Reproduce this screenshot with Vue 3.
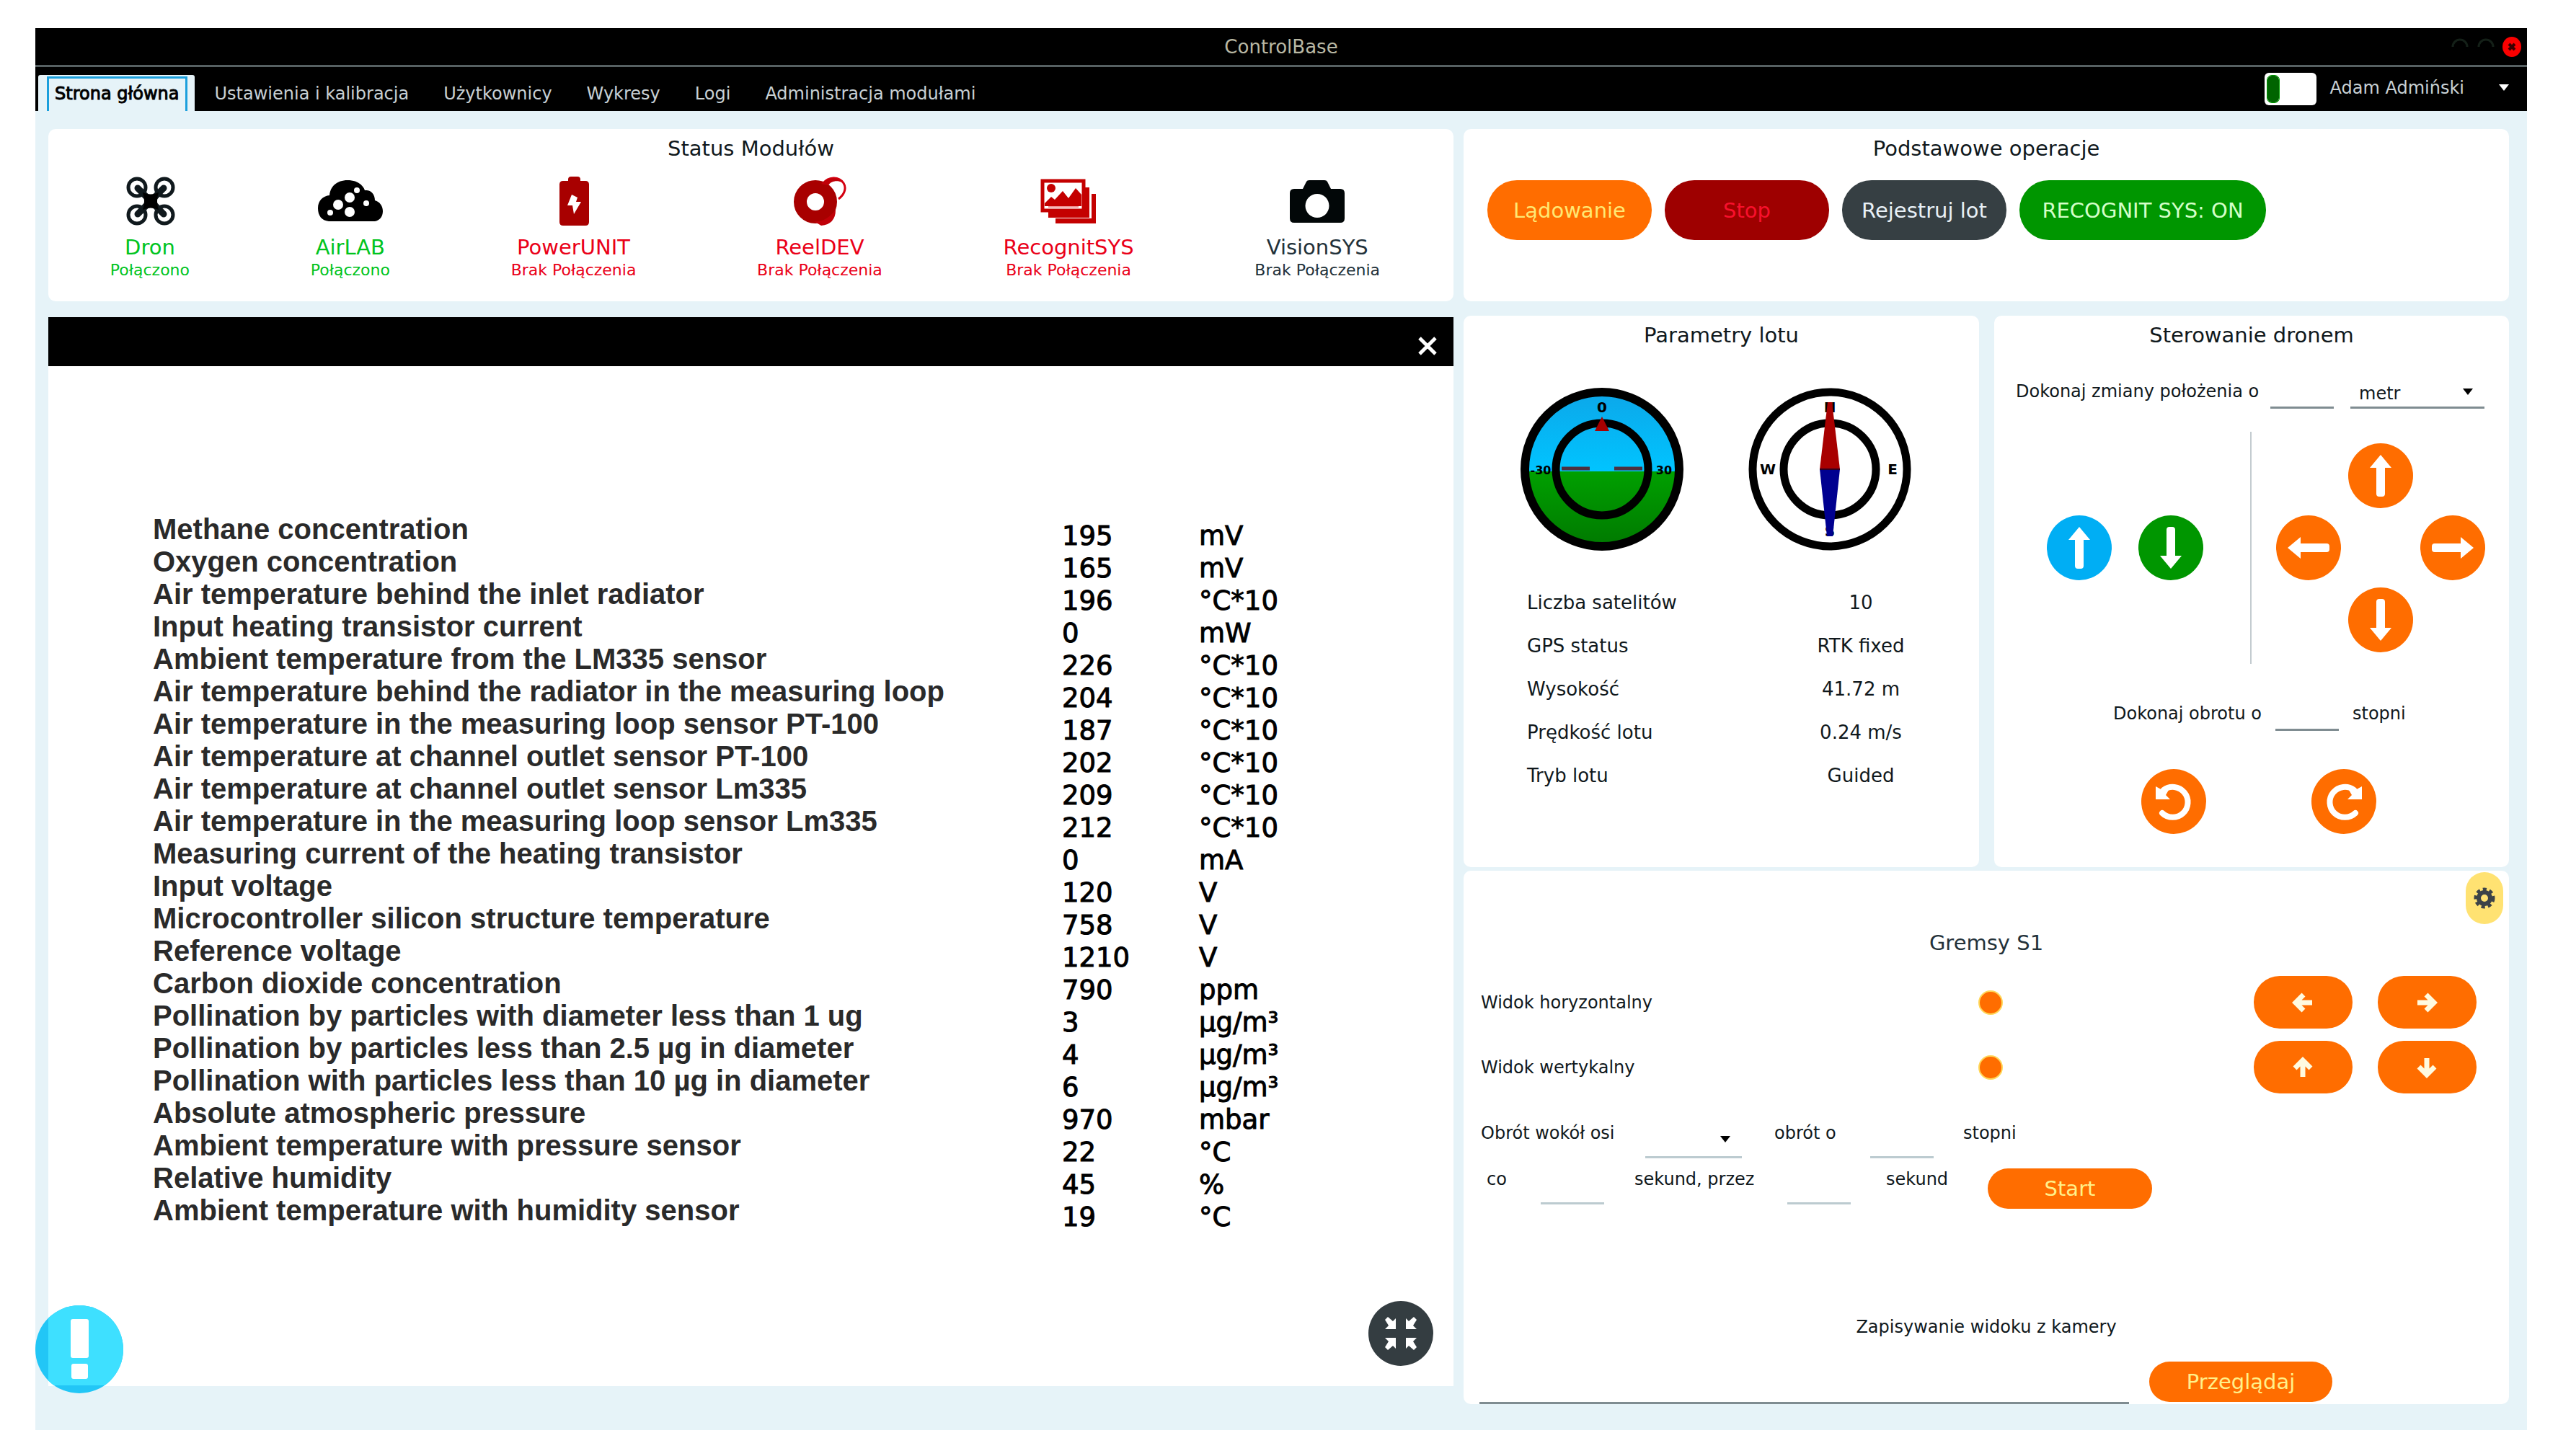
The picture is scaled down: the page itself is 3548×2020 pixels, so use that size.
<script setup>
import { ref } from 'vue'

const tabs = ['Strona główna', 'Ustawienia i kalibracja', 'Użytkownicy', 'Wykresy', 'Logi', 'Administracja modułami']

const modules = [
  { name: 'Dron', state: 'Połączono', tone: 'ok', icon: 'drone' },
  { name: 'AirLAB', state: 'Połączono', tone: 'ok', icon: 'cloud' },
  { name: 'PowerUNIT', state: 'Brak Połączenia', tone: 'bad', icon: 'battery' },
  { name: 'ReelDEV', state: 'Brak Połączenia', tone: 'bad', icon: 'reel' },
  { name: 'RecognitSYS', state: 'Brak Połączenia', tone: 'bad', icon: 'photos' },
  { name: 'VisionSYS', state: 'Brak Połączenia', tone: 'idle', icon: 'camera' },
]

const readings = [
  ['Methane concentration', '195', 'mV'],
  ['Oxygen concentration', '165', 'mV'],
  ['Air temperature behind the inlet radiator', '196', '°C*10'],
  ['Input heating transistor current', '0', 'mW'],
  ['Ambient temperature from the LM335 sensor', '226', '°C*10'],
  ['Air temperature behind the radiator in the measuring loop', '204', '°C*10'],
  ['Air temperature in the measuring loop sensor PT-100', '187', '°C*10'],
  ['Air temperature at channel outlet sensor PT-100', '202', '°C*10'],
  ['Air temperature at channel outlet sensor Lm335', '209', '°C*10'],
  ['Air temperature in the measuring loop sensor Lm335', '212', '°C*10'],
  ['Measuring current of the heating transistor', '0', 'mA'],
  ['Input voltage', '120', 'V'],
  ['Microcontroller silicon structure temperature', '758', 'V'],
  ['Reference voltage', '1210', 'V'],
  ['Carbon dioxide concentration', '790', 'ppm'],
  ['Pollination by particles with diameter less than 1 ug', '3', 'µg/m³'],
  ['Pollination by particles less than 2.5 µg in diameter', '4', 'µg/m³'],
  ['Pollination with particles less than 10 µg in diameter', '6', 'µg/m³'],
  ['Absolute atmospheric pressure', '970', 'mbar'],
  ['Ambient temperature with pressure sensor', '22', '°C'],
  ['Relative humidity', '45', '%'],
  ['Ambient temperature with humidity sensor', '19', '°C'],
]

const flight = [
  ['Liczba satelitów', '10'],
  ['GPS status', 'RTK fixed'],
  ['Wysokość', '41.72 m'],
  ['Prędkość lotu', '0.24 m/s'],
  ['Tryb lotu', 'Guided'],
]

// Long arrow pointing up, turned by angle for the other directions
const moves = [
  { label: 'Do przodu', angle: 0, area: 'up' },
  { label: 'W lewo', angle: 270, area: 'left' },
  { label: 'W prawo', angle: 90, area: 'right' },
  { label: 'Do tyłu', angle: 180, area: 'down' },
]

const axes = [
  { id: 'horizontal', label: 'Widok horyzontalny', buttons: [{ label: 'Kamera w lewo', angle: 270 }, { label: 'Kamera w prawo', angle: 90 }] },
  { id: 'vertical', label: 'Widok wertykalny', buttons: [{ label: 'Kamera w górę', angle: 0 }, { label: 'Kamera w dół', angle: 180 }] },
]

const position = ref({ horizontal: 50, vertical: 50 })
const longArrow = 'M45 16 L60 34 H51 V70 Q51 74 47 74 H43 Q39 74 39 70 V34 H30 Z'
</script>

<template>
  <div class="app">
    <header class="titlebar">
      <span class="window-title">ControlBase</span>
      <div class="window-buttons">
        <button type="button" aria-label="Minimalizuj">
          <svg width="26" height="26" viewBox="0 0 26 26"><path d="M3 13a10 10 0 0 1 20 0" fill="none" stroke="#142018" stroke-width="3" /></svg>
        </button>
        <button type="button" aria-label="Maksymalizuj">
          <svg width="26" height="26" viewBox="0 0 26 26"><path d="M3 13a10 10 0 0 1 20 0" fill="none" stroke="#142018" stroke-width="3" /></svg>
        </button>
        <button type="button" aria-label="Zamknij">
          <svg width="26" height="28" viewBox="0 0 26 28"><ellipse cx="13" cy="14" rx="13" ry="14" fill="#fa0000" /><path d="M9 10l8 8M17 10l-8 8" stroke="#3a0000" stroke-width="4" /></svg>
        </button>
      </div>
    </header>

    <nav class="navbar">
      <a v-for="(tab, i) in tabs" :key="tab" href="#" class="tab" :class="{ active: i === 0 }"><span>{{ tab }}</span></a>
      <label class="switch"><input type="checkbox" aria-label="Tryb" /></label>
      <button type="button" class="user">Adam Admiński<i class="caret light"></i></button>
    </nav>

    <main class="board">
      <div class="column left">
        <section class="card top">
          <h2>Status Modułów</h2>
          <ul class="modules">
            <li v-for="m in modules" :key="m.name" :class="m.tone">
              <svg v-if="m.icon === 'drone'" class="glyph" viewBox="0 0 96 68">
                <g fill="none" stroke="#10191d" stroke-width="5">
                  <circle cx="30" cy="15" r="12" /><circle cx="68" cy="15" r="12" /><circle cx="30" cy="53" r="12" /><circle cx="68" cy="53" r="12" />
                </g>
                <path d="M31 16L67 52M67 16L31 52" stroke="#10191d" stroke-width="9" stroke-linecap="round" />
                <path d="M38 22q11 5 22 0q-4 12 0 24q-11 -5 -22 0q4 -12 0 -24z" fill="#000" />
              </svg>
              <svg v-else-if="m.icon === 'cloud'" class="glyph" viewBox="0 0 96 68">
                <path d="M18 62C8 61 3 54 3 44C3 33 10 27 19 26C20 13 30 5 44 5C57 5 65 11 68 19C76 18 82 24 82 33C89 35 93 41 93 48C93 56 88 61 82 62Z" fill="#000" />
                <g fill="#fff"><circle cx="47" cy="29" r="7" /><circle cx="31" cy="39" r="7" /><circle cx="47" cy="49" r="7" /><circle cx="57" cy="19" r="4" /><circle cx="70" cy="37" r="4" /><circle cx="20" cy="50" r="4" /></g>
              </svg>
              <svg v-else-if="m.icon === 'battery'" class="glyph" viewBox="0 0 96 68">
                <path d="M33 6H40V4Q40 0 44 0H53Q57 0 57 4V6H64Q69 6 69 11V63Q69 68 64 68H33Q28 68 28 63V11Q28 6 33 6Z" fill="#a80000" />
                <path d="M45 25L39 40H46L48 52L58 35H51L53 29Z" fill="#fff" />
              </svg>
              <svg v-else-if="m.icon === 'reel'" class="glyph" viewBox="0 0 96 68">
                <circle cx="42" cy="35" r="21" fill="none" stroke="#a80000" stroke-width="18" />
                <path d="M52 10C60 0 74 -1 81 9C86 17 81 26 74 31" fill="none" stroke="#d40010" stroke-width="3" />
                <path d="M50 10C60 0 73 0 79 8C70 4 62 8 60 12ZM40 62Q56 64 70 46Q70 66 50 68Z" fill="#c00008" />
              </svg>
              <svg v-else-if="m.icon === 'photos'" class="glyph" viewBox="0 0 96 68">
                <path d="M30 50V65H86V24H80V58H30Z" fill="#c40000" />
                <path d="M20 44V57H77V15H71V49H20Z" fill="#c40000" />
                <rect x="12" y="6" width="57" height="41" fill="#fff" stroke="#c40000" stroke-width="5" />
                <circle cx="24" cy="16" r="6" fill="#c40000" />
                <path d="M15 37L24 28L29 32L40 20L48 30L58 16L66 25V41H15Z" fill="#c40000" />
                <path d="M20 42H62" stroke="#f09090" stroke-width="2" />
              </svg>
              <svg v-else class="glyph" viewBox="0 0 96 68">
                <path fill-rule="evenodd" d="M16 17H28L33 7Q34 5 37 5H58Q61 5 62 7L67 17H80Q86 17 86 23V58Q86 64 80 64H16Q10 64 10 58V23Q10 17 16 17ZM48 24A16 16 0 1 0 48 57A16 16 0 1 0 48 24Z" fill="#020708" />
              </svg>
              <strong>{{ m.name }}</strong>
              <small>{{ m.state }}</small>
            </li>
          </ul>
        </section>

        <section class="panel">
          <div class="panel-bar">
            <button type="button" aria-label="Zamknij panel">
              <svg width="28" height="28" viewBox="0 0 28 28"><path d="M3 3L25 25M25 3L3 25" stroke="#fff" stroke-width="5" /></svg>
            </button>
          </div>
          <table class="readings">
            <tbody>
              <tr v-for="r in readings" :key="r[0]">
                <th scope="row">{{ r[0] }}</th>
                <td class="amount">{{ r[1] }}</td>
                <td>{{ r[2] }}</td>
              </tr>
            </tbody>
          </table>
          <button type="button" class="compress" aria-label="Zmniejsz">
            <svg width="90" height="90" viewBox="0 0 90 90">
              <circle cx="45" cy="45" r="45" fill="#343d41" />
              <g fill="#fff">
                <path d="M23 26L27 22L34 28L38 24V39H23L28 34Z" />
                <path d="M67 26L63 22L56 28L52 24V39H67L62 34Z" />
                <path d="M23 64L27 68L34 62L38 66V51H23L28 56Z" />
                <path d="M67 64L63 68L56 62L52 66V51H67L62 56Z" />
              </g>
            </svg>
          </button>
        </section>
      </div>

      <div class="column right">
        <section class="card top">
          <h2>Podstawowe operacje</h2>
          <div class="operations">
            <button type="button" class="pill land">Lądowanie</button>
            <button type="button" class="pill stop">Stop</button>
            <button type="button" class="pill record">Rejestruj lot</button>
            <button type="button" class="pill recognit">RECOGNIT SYS: ON</button>
          </div>
        </section>

        <div class="pair">
          <section class="card">
            <h2>Parametry lotu</h2>
            <div class="gauges">
              <svg viewBox="0 0 226 226" class="gauge">
                <defs>
                  <linearGradient id="sky" x1="0" y1="0" x2="0" y2="1"><stop offset="0" stop-color="#0ca8ea" /><stop offset="1" stop-color="#00c4ff" /></linearGradient>
                  <linearGradient id="ground" x1="0" y1="0" x2="0" y2="1"><stop offset="0" stop-color="#00a000" /><stop offset="1" stop-color="#007800" /></linearGradient>
                </defs>
                <path d="M6 116A107 107 0 0 1 220 116Z" fill="url(#sky)" />
                <path d="M6 116A107 107 0 0 0 220 116Z" fill="url(#ground)" />
                <circle cx="113" cy="113" r="107" fill="none" stroke="#000" stroke-width="12" />
                <circle cx="113" cy="113" r="64" fill="none" stroke="#000" stroke-width="11" />
                <path d="M57 112H96M130 112H169" stroke="#4c3040" stroke-width="5" />
                <path d="M113 40L123 60H103Z" fill="#a80000" />
                <text x="113" y="34" text-anchor="middle">0</text>
                <text x="28" y="120" text-anchor="middle" class="tick">-30</text>
                <text x="199" y="120" text-anchor="middle" class="tick">30</text>
              </svg>
              <svg viewBox="0 0 226 226" class="gauge">
                <circle cx="113" cy="113" r="107" fill="none" stroke="#000" stroke-width="11" />
                <circle cx="113" cy="113" r="64" fill="none" stroke="#000" stroke-width="11" />
                <text x="113" y="34" text-anchor="middle">N</text>
                <text x="113" y="206" text-anchor="middle">S</text>
                <text x="27" y="120" text-anchor="middle">W</text>
                <text x="200" y="120" text-anchor="middle">E</text>
                <path d="M110 20H116L127 113H99Z" fill="#a80000" />
                <path d="M99 113H127L117 206H109Z" fill="#000090" />
                <path d="M99 113H127" stroke="#300020" stroke-width="2" />
              </svg>
            </div>
            <table class="flight">
              <tbody>
                <tr v-for="f in flight" :key="f[0]"><th scope="row">{{ f[0] }}</th><td>{{ f[1] }}</td></tr>
              </tbody>
            </table>
          </section>

          <section class="card">
            <h2>Sterowanie dronem</h2>
            <div class="line shift">
              <label for="shift">Dokonaj zmiany położenia o</label>
              <input id="shift" type="text" class="field short" />
              <span class="select"><select class="field" aria-label="Jednostka"><option>metr</option></select><i class="caret"></i></span>
            </div>
            <div class="steering">
              <div class="lift">
                <button type="button" class="round blue" aria-label="W górę"><svg viewBox="0 0 90 90"><path :d="longArrow" /></svg></button>
                <button type="button" class="round green" aria-label="W dół"><svg viewBox="0 0 90 90"><path :d="longArrow" transform="rotate(180 45 45)" /></svg></button>
              </div>
              <div class="pad">
                <button v-for="m in moves" :key="m.area" type="button" class="round" :class="m.area" :aria-label="m.label">
                  <svg viewBox="0 0 90 90"><path :d="longArrow" :transform="`rotate(${m.angle} 45 45)`" /></svg>
                </button>
              </div>
            </div>
            <div class="line turn">
              <label for="turn">Dokonaj obrotu o</label>
              <input id="turn" type="text" class="field short" />
              <span>stopni</span>
            </div>
            <div class="rotate">
              <button type="button" class="round" aria-label="Obrót w lewo">
                <svg viewBox="0 0 90 90"><path d="M29 61A21 21 0 1 0 31 29" class="arc" /><path d="M20 24V42H40L34 36L38 29L29 29Z" /></svg>
              </button>
              <button type="button" class="round" aria-label="Obrót w prawo">
                <svg viewBox="0 0 90 90"><g transform="matrix(-1 0 0 1 90 0)"><path d="M29 61A21 21 0 1 0 31 29" class="arc" /><path d="M20 24V42H40L34 36L38 29L29 29Z" /></g></svg>
              </button>
            </div>
          </section>
        </div>

        <section class="card gimbal">
          <button type="button" class="gear" aria-label="Ustawienia">
            <svg width="30" height="30" viewBox="0 0 30 30">
              <circle cx="15" cy="15" r="12" fill="none" stroke="#3c4348" stroke-width="5" stroke-dasharray="5 4" />
              <circle cx="15" cy="15" r="8" fill="none" stroke="#3c4348" stroke-width="6" />
            </svg>
          </button>
          <h2>Gremsy S1</h2>
          <div v-for="a in axes" :key="a.id" class="axis">
            <label :for="a.id">{{ a.label }}</label>
            <input :id="a.id" v-model="position[a.id]" type="range" min="0" max="100" />
            <div class="axis-buttons">
              <button v-for="b in a.buttons" :key="b.label" type="button" :aria-label="b.label">
                <svg width="30" height="30" viewBox="0 0 30 30"><path :transform="`rotate(${b.angle} 15 15)`" d="M4 16L15 5L26 16M15 7V28" fill="none" stroke="#fffbe0" stroke-width="7" /></svg>
              </button>
            </div>
          </div>
          <div class="orbit">
            <label for="axis" class="w-axis">Obrót wokół osi</label>
            <span class="select narrow"><select id="axis" class="field pale"><option></option></select><i class="caret"></i></span>
            <label for="angle" class="w-angle">obrót o</label>
            <input id="angle" type="text" class="field short pale" />
            <span class="unit">stopni</span>
          </div>
          <div class="orbit second">
            <label for="every" class="w-every">co</label>
            <input id="every" type="text" class="field short pale" />
            <label for="during" class="w-during">sekund, przez</label>
            <input id="during" type="text" class="field short pale" />
            <span class="w-seconds">sekund</span>
            <button type="button" class="action">Start</button>
          </div>
          <label for="path" class="record-label">Zapisywanie widoku z kamery</label>
          <div class="record-row">
            <input id="path" type="text" class="field path" />
            <button type="button" class="action browse">Przeglądaj</button>
          </div>
        </section>
      </div>
    </main>

    <button type="button" class="alert" aria-label="Powiadomienia">
      <svg width="122" height="122" viewBox="0 0 122 122">
        <defs><clipPath id="disc"><circle cx="61" cy="61" r="61" /></clipPath></defs>
        <g clip-path="url(#disc)">
          <rect width="122" height="122" fill="#22c6f6" />
          <rect x="18" width="104" height="111" fill="#3ee0ff" />
        </g>
        <rect x="49" y="19" width="25" height="54" rx="3" fill="#fff" />
        <rect x="50" y="81" width="23" height="21" rx="3" fill="#fff" />
      </svg>
    </button>
  </div>
</template>

<style>
body {
  margin: 0;
  background: #fff;
}
</style>

<style scoped>
.app {
  position: relative;
  margin: 39px 43px 36px 49px;
  background: #e6f3f8;
  color: #10181c;
  font: 24px/32px "DejaVu Sans", sans-serif;
}
button {
  display: flex;
  align-items: center;
  justify-content: center;
  margin: 0;
  padding: 0;
  border: 0;
  background: none;
  color: inherit;
  font: inherit;
}
svg {
  display: block;
}
h2 {
  margin: 0;
  font-size: 29px;
  font-weight: 400;
  line-height: 36px;
  text-align: center;
}

/* Window frame and navigation */
.titlebar {
  display: grid;
  grid-template-columns: 1fr auto 1fr;
  align-items: center;
  height: 51px;
  background: #000;
  border-bottom: 3px solid #566062;
}
.window-title {
  grid-column: 2;
  color: #b9b8a4;
  font-size: 26px;
}
.window-buttons {
  display: flex;
  gap: 10px;
  justify-content: flex-end;
  padding-right: 8px;
}
.navbar {
  display: flex;
  align-items: center;
  height: 61px;
  padding-left: 4px;
  background: #000;
}
.tab {
  margin-right: 48px;
  padding-top: 12px;
  color: #c8d0d4;
  text-decoration: none;
  white-space: nowrap;
}
.tab.active {
  align-self: flex-end;
  margin-right: 28px;
  padding: 2px 10px 0 12px;
  border-radius: 3px 3px 0 0;
  background: #e6f3f8;
  color: #000;
}
.tab.active span {
  display: block;
  padding: 5px 8px 8px;
  border: 3px solid #1b9fdc;
  border-bottom: 0;
  -webkit-text-stroke: 1px #000;
}
.switch {
  margin-left: auto;
}
.switch input {
  display: flex;
  align-items: center;
  width: 72px;
  height: 45px;
  margin: 0;
  padding: 4px;
  box-sizing: border-box;
  appearance: none;
  border-radius: 6px;
  background: #fff;
}
.switch input::before {
  content: "";
  width: 16px;
  height: 37px;
  border-radius: 6px;
  background: #006400;
  outline: 1px solid #009a00;
}
.user {
  gap: 48px;
  padding: 0 25px 4px 18px;
  color: #c8d0d4;
}
.caret {
  width: 0;
  height: 0;
  border: 7px solid transparent;
  border-top: 9px solid #000;
  border-bottom: 0;
}
.caret.light {
  border-top-color: #fff;
}

/* Board */
.board {
  display: grid;
  grid-template-columns: 1949fr 1450fr;
  gap: 14px;
  align-items: start;
  padding: 25px 25px 36px 18px;
}
.card {
  border-radius: 10px;
  background: #fff;
  padding-top: 9px;
  box-sizing: border-box;
}
.card.top {
  min-height: 239px;
}
.left .card.top {
  margin-bottom: 22px;
}
.right .card.top {
  margin-bottom: 20px;
}
.modules {
  display: flex;
  justify-content: space-around;
  margin: 21px 0 0;
  padding: 0 18px 0 2px;
  list-style: none;
}
.modules li {
  display: flex;
  flex-direction: column;
  align-items: center;
}
.modules .glyph {
  width: 96px;
  height: 68px;
}
.modules strong {
  margin-top: 12px;
  font-size: 29px;
  font-weight: 400;
  line-height: 36px;
}
.modules small {
  font-size: 22px;
  line-height: 28px;
}
.ok {
  color: #00c41e;
}
.bad {
  color: #ea0018;
}
.idle {
  color: #22313a;
}
.operations {
  display: flex;
  gap: 18px;
  margin: 26px 0 0 33px;
}
.pill {
  width: 228px;
  height: 83px;
  border-radius: 41px;
  font-size: 29px;
  white-space: nowrap;
}
.land {
  background: #ff6d00;
  color: #ffe873;
}
.stop {
  background: #9e0000;
  color: #f8102c;
}
.record {
  background: #363f43;
  color: #e8f0f6;
}
.recognit {
  width: 342px;
  background: #009600;
  color: #d4ffc8;
}

/* Sensor readings */
.panel {
  padding-bottom: 28px;
  background: #fff;
}
.panel-bar {
  display: flex;
  justify-content: flex-end;
  align-items: center;
  height: 68px;
  padding: 0 22px;
  background: #000;
}
.panel-bar button {
  padding-top: 12px;
}
.readings {
  margin: 204px 0 0 145px;
  border-collapse: collapse;
  color: #000;
  font-size: 37px;
}
.readings th {
  width: 1261px;
  padding: 0;
  color: #2a2a2a;
  font: bold 40px/45px "Liberation Sans", sans-serif;
  text-align: left;
}
.readings td {
  padding: 18px 0 0;
  line-height: 27px;
  -webkit-text-stroke: 1px #000;
}
.readings .amount {
  width: 190px;
}
.compress {
  margin: 103px 28px 0 auto;
}

/* Flight parameters */
.pair {
  display: grid;
  grid-template-columns: 1fr 1fr;
  gap: 21px;
  margin-bottom: 5px;
}
.gauges {
  display: flex;
  gap: 90px;
  margin: 55px 0 0 79px;
}
.gauge {
  width: 226px;
  height: 226px;
  fill: #000;
  font: bold 20px "DejaVu Sans", sans-serif;
}
.gauge .tick {
  font-size: 16px;
}
.flight {
  width: 543px;
  margin: 42px 84px 97px 88px;
  border-collapse: collapse;
  font-size: 26px;
  line-height: 60px;
}
.flight th {
  padding: 0;
  font-weight: 400;
  text-align: left;
}
.flight td {
  width: 160px;
  padding: 0;
  text-align: center;
}

/* Drone control */
.line {
  display: flex;
  white-space: nowrap;
}
.field {
  box-sizing: border-box;
  height: 40px;
  padding: 0 12px;
  border: 0;
  border-bottom: 3px solid #7f8c91;
  border-radius: 0;
  outline: 0;
  appearance: none;
  background: none;
  color: inherit;
  font: inherit;
}
.field.short {
  width: 88px;
}
.field.pale {
  height: 64px;
  border-color: #bccbd0;
}
.select {
  position: relative;
}
.select .field {
  width: 100%;
}
.select .caret {
  position: absolute;
  top: 12px;
  right: 16px;
  pointer-events: none;
}
.shift {
  margin: 44px 34px 0 30px;
}
.shift label {
  flex: 1;
}
.shift .select {
  width: 186px;
  margin-left: 23px;
}
.steering {
  display: grid;
  grid-template-columns: 1fr 1fr;
  align-items: center;
  margin-top: 32px;
}
.lift {
  display: flex;
  gap: 37px;
  align-items: center;
  justify-content: center;
  height: 322px;
  padding-left: 8px;
  border-right: 2px solid #c3ccd0;
}
.pad {
  display: grid;
  grid-template-areas: ". up ." "left . right" ". down .";
  gap: 10px;
  justify-content: center;
}
.up {
  grid-area: up;
}
.left.round {
  grid-area: left;
}
.right.round {
  grid-area: right;
}
.down {
  grid-area: down;
}
.round {
  width: 90px;
  height: 90px;
  border-radius: 50%;
  background: #ff6d00;
}
.round svg {
  width: 90px;
  height: 90px;
  fill: #fff;
}
.round .arc {
  fill: none;
  stroke: #fff;
  stroke-width: 8px;
  stroke-linecap: round;
}
.round.blue {
  background: #00aef4;
}
.round.green {
  background: #009600;
}
.turn {
  gap: 19px;
  margin: 53px 0 0 165px;
}
.rotate {
  display: flex;
  gap: 146px;
  justify-content: center;
  margin: 53px 0 46px 20px;
}

/* Gimbal */
.gimbal {
  position: relative;
  padding-top: 82px;
}
.gimbal h2 {
  margin-bottom: 28px;
  color: #24323a;
}
.gear {
  position: absolute;
  top: 2px;
  right: 8px;
  width: 52px;
  height: 72px;
  border-radius: 26px;
  background: #ffe272;
}
.axis {
  display: grid;
  grid-template-columns: 558fr 300px 524fr;
  align-items: center;
  margin: 0 45px 17px 24px;
}
.axis input {
  height: 34px;
  margin: 0;
  appearance: none;
  background: none;
}
.axis input::-webkit-slider-thumb {
  width: 34px;
  height: 34px;
  appearance: none;
  border: 2px solid #ffd75a;
  border-radius: 50%;
  background: #ff6d00;
}
.axis-buttons {
  display: flex;
  gap: 35px;
  justify-content: flex-end;
}
.axis-buttons button {
  width: 137px;
  height: 73px;
  border-radius: 36px;
  background: #ff6d00;
}
.orbit {
  display: flex;
  align-items: flex-start;
  margin: 26px 0 0 24px;
  line-height: 58px;
  white-space: nowrap;
}
.orbit.second {
  margin: 0 0 0 32px;
}
.w-axis {
  width: 228px;
}
.select.narrow {
  width: 134px;
}
.select.narrow .caret {
  top: 33px;
}
.w-angle {
  width: 133px;
  margin-left: 45px;
}
.unit {
  margin-left: 41px;
}
.w-every {
  width: 75px;
}
.w-during {
  width: 212px;
  margin-left: 42px;
}
.w-seconds {
  width: 141px;
  margin-left: 49px;
}
.action {
  width: 228px;
  height: 56px;
  border-radius: 28px;
  background: #ff6d00;
  color: #fff08a;
  font-size: 29px;
  line-height: 36px;
}
.orbit .action {
  margin-top: 14px;
}
.record-label {
  display: block;
  margin: 148px 0 32px;
  text-align: center;
}
.record-row {
  display: flex;
  gap: 28px;
  align-items: flex-start;
  padding-left: 22px;
}
.field.path {
  width: 901px;
  height: 59px;
}
.action.browse {
  width: 254px;
}

.alert {
  position: absolute;
  bottom: 51px;
  left: 0;
}
</style>
